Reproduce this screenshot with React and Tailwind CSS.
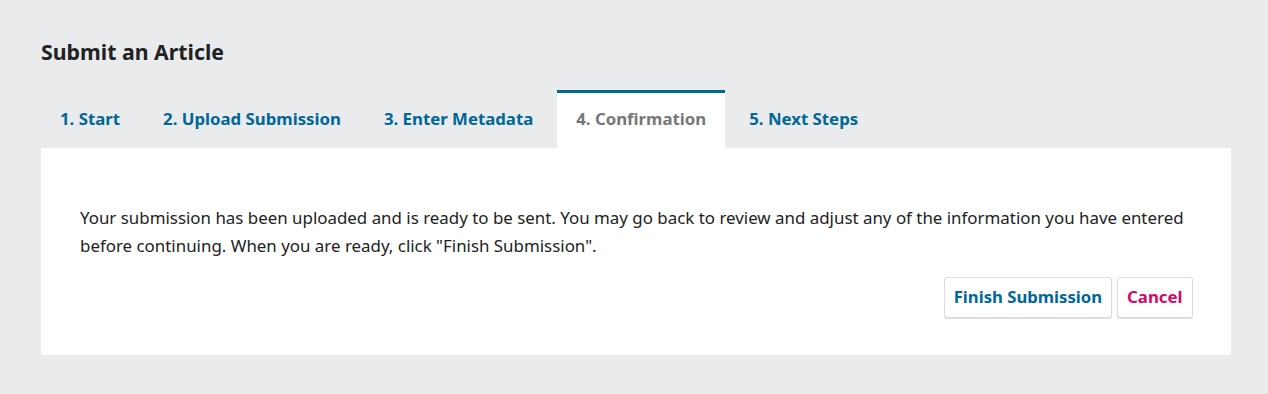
export default function App() {
  const tabs = ['1. Start', '2. Upload Submission', '3. Enter Metadata', '4. Confirmation', '5. Next Steps']
  const active = 3

  return (
    <div className="w-[1268px] h-[394px] bg-[#e9ebec] font-['Noto_Sans',sans-serif] px-[41px] pt-[38px]">
      <h1 className="text-[21.3px] font-bold text-[#222] leading-[28px] m-0">Submit an Article</h1>

      <div className="flex mt-[24px] gap-[5px]">
        {tabs.map((t, i) => (
          <div
            key={t}
            className={
              i === active
                ? "bg-white border-t-[3px] border-[#006798] px-[19px] pb-[4px] h-[58px] flex items-center text-[16.8px] font-bold text-[#777]"
                : "border-t-[3px] border-transparent px-[19px] pb-[4px] h-[58px] flex items-center text-[16.8px] font-bold text-[#006798]"
            }
          >
            {t}
          </div>
        ))}
      </div>

      <div className="bg-white w-[1190px] h-[207px] pl-[39px] pr-[38px] pt-[56px]">
        <p className="text-[16.9px] leading-[28px] text-[#222] m-0">
          Your submission has been uploaded and is ready to be sent. You may go back to review and adjust any of the information you have entered before continuing. When you are ready, click "Finish Submission".
        </p>
        <div className="flex justify-end gap-[5px] mt-[17px]">
          <button className="h-[41px] px-[8.5px] pb-[1px] bg-white border border-[#ddd] rounded-[3px] shadow-[0_1px_0_#ddd] text-[16.7px] font-bold text-[#006798]">
            Finish Submission
          </button>
          <button className="h-[41px] px-[9.5px] pb-[1px] bg-white border border-[#ddd] rounded-[3px] shadow-[0_1px_0_#ddd] text-[16.8px] font-bold text-[#d00a6c]">
            Cancel
          </button>
        </div>
      </div>
    </div>
  )
}
